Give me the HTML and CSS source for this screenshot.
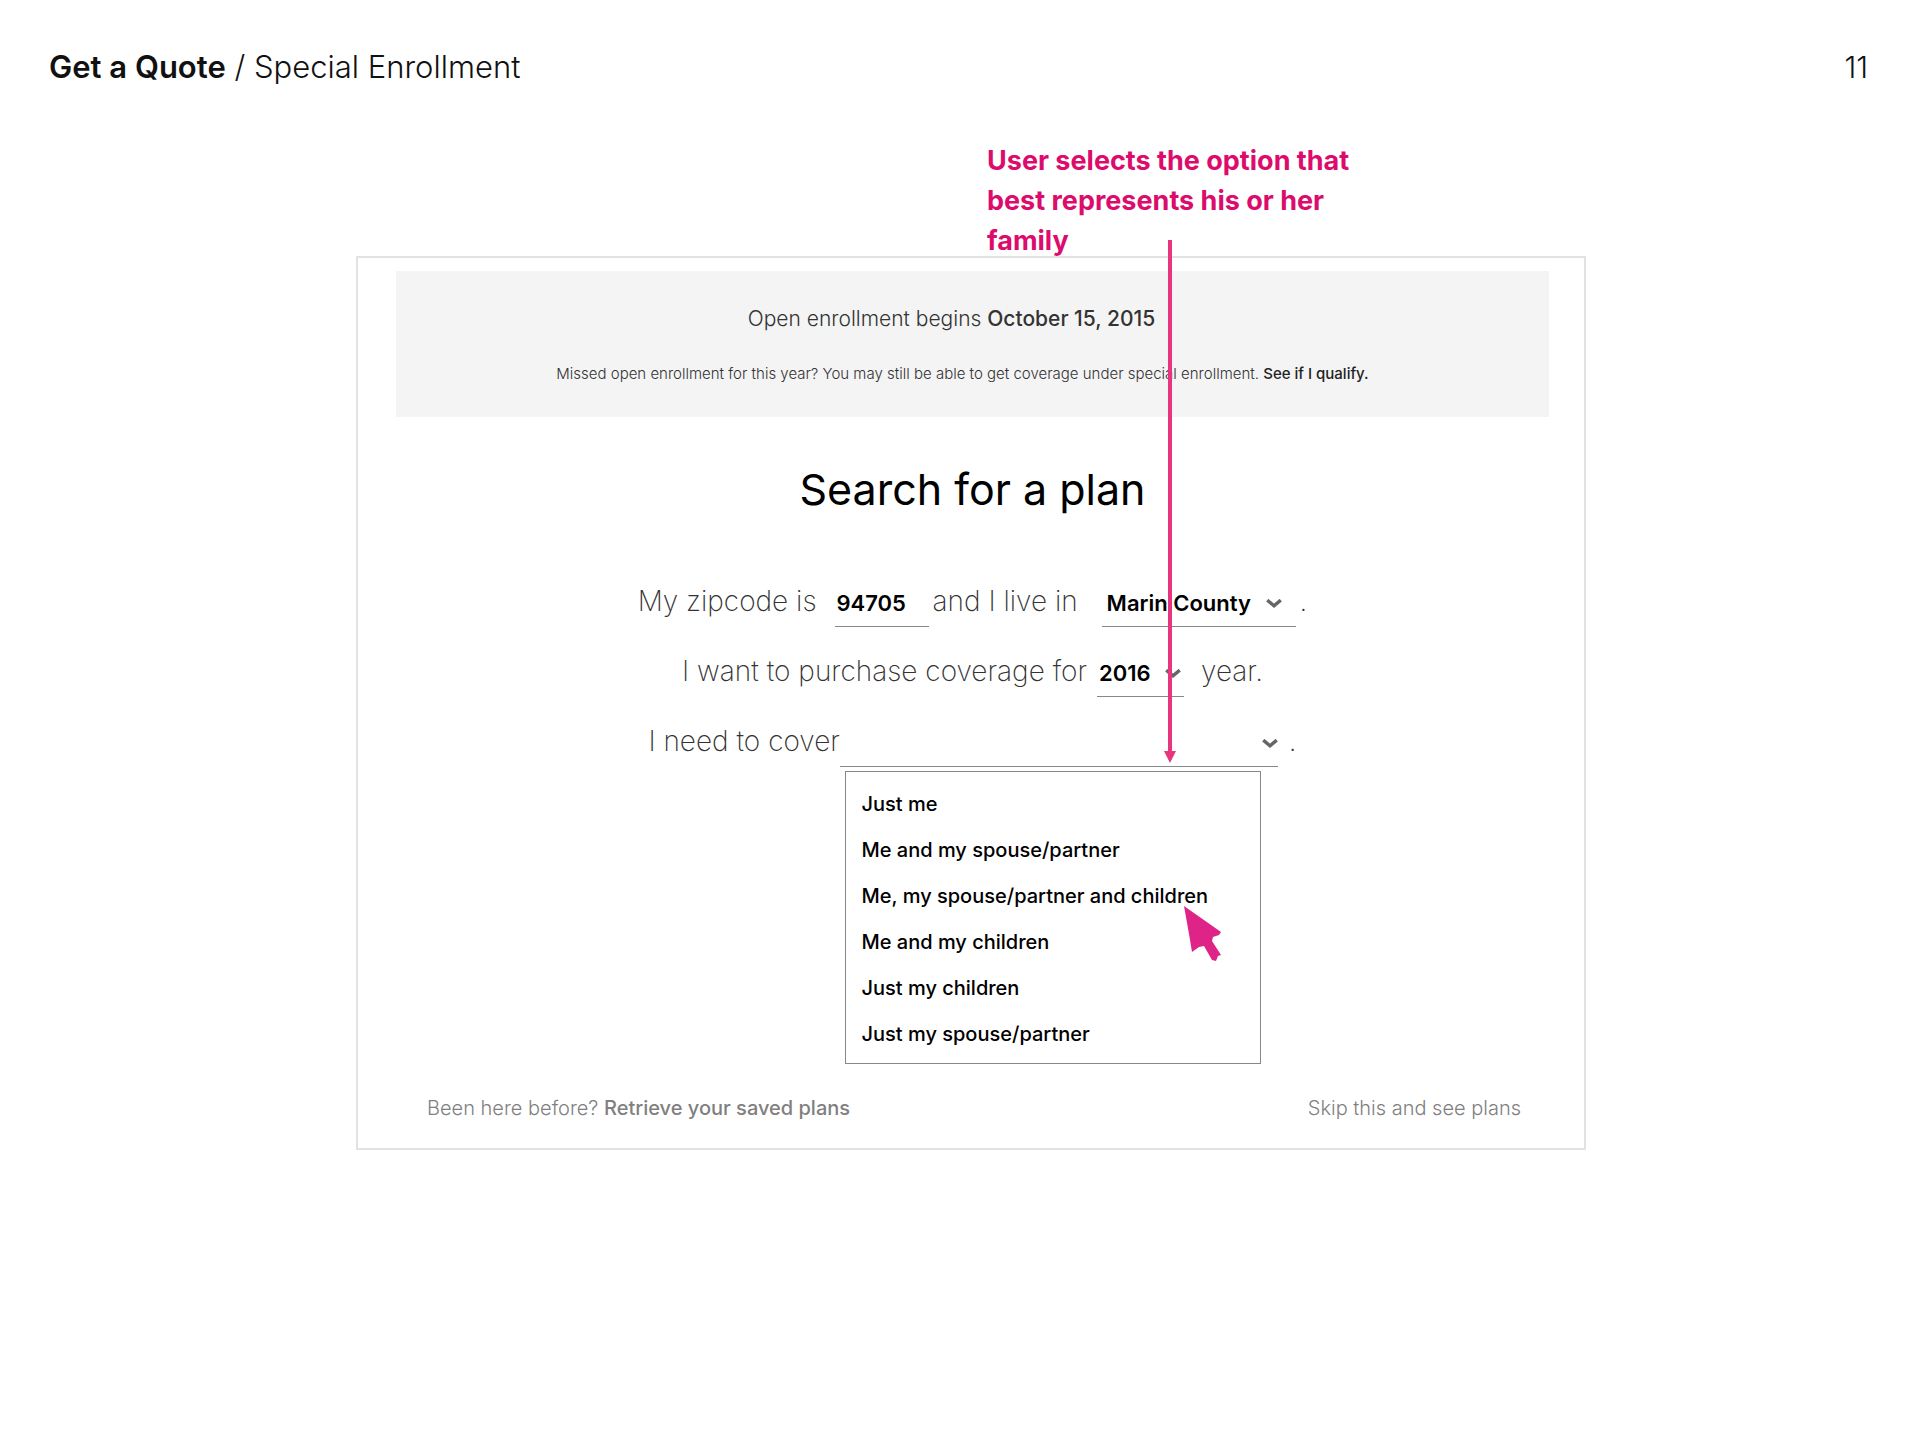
FILE: index.html
```html
<!DOCTYPE html>
<html lang="en">
<head>
<meta charset="utf-8">
<meta name="viewport" content="width=device-width, initial-scale=1">
<title>Get a Quote / Special Enrollment</title>
<link rel="stylesheet" href="styles.css">
</head>
<body>
<header class="page-header">
  <h1 class="page-title"><strong>Get a Quote</strong> / Special Enrollment</h1>
  <span class="page-number">11</span>
</header>
<main class="stage">
  <p class="callout">User selects the option that best represents his or her family</p>
  <section class="card">
    <div class="banner">
      <p class="banner-lead">Open enrollment begins <strong>October 15, 2015</strong></p>
      <p class="banner-note">Missed open enrollment for this year? You may still be able to get coverage under special enrollment. <a href="#qualify">See if I qualify.</a></p>
    </div>
    <h2 class="card-title">Search for a plan</h2>
    <form class="sentence">
      <div class="row">
        <label class="gap-wide" for="zip">My zipcode is</label>
        <input class="control zip" id="zip" type="text" value="94705">
        <label class="gap-lead gap-county" for="county">and I live in</label>
        <span class="field county">
          <select class="control" id="county"><option>Marin County</option></select>
          <svg class="chevron" viewBox="0 0 14 8" aria-hidden="true"><path d="M1 1l6 5 6-5"/></svg>
        </span>
        <span class="stop">.</span>
      </div>
      <div class="row">
        <label class="gap-narrow" for="year">I want to purchase coverage for</label>
        <span class="field year">
          <select class="control" id="year"><option>2016</option></select>
          <svg class="chevron" viewBox="0 0 14 8" aria-hidden="true"><path d="M1 1l6 5 6-5"/></svg>
        </span>
        <span class="after-year">year.</span>
      </div>
      <div class="row">
        <label for="cover">I need to cover</label>
        <span class="field cover">
          <select class="control" id="cover"><option></option></select>
          <svg class="chevron" viewBox="0 0 14 8" aria-hidden="true"><path d="M1 1l6 5 6-5"/></svg>
        </span>
        <span class="stop stop-far">.</span>
      </div>
      <ul class="menu">
        <li><button type="button">Just me</button></li>
        <li><button type="button">Me and my spouse/partner</button></li>
        <li><button type="button">Me, my spouse/partner and children</button></li>
        <li><button type="button">Me and my children</button></li>
        <li><button type="button">Just my children</button></li>
        <li><button type="button">Just my spouse/partner</button></li>
        <li class="pointer" aria-hidden="true"><svg viewBox="0 0 38 56"><path d="M0 0L37 26 35 29 29 31 28 35 37 49 34 50 32 55 28 54 20 40 15 41 8 46 5 28z"/></svg></li>
      </ul>
    </form>
    <footer class="card-footer">
      <p>Been here before? <a class="strong-link" href="#saved">Retrieve your saved plans</a></p>
      <a href="#plans">Skip this and see plans</a>
    </footer>
  </section>
  <svg class="arrow" viewBox="0 0 12 523" aria-hidden="true"><path d="M4 0h4v511h4l-6 12-6-12h4z"/></svg>
</main>
</body>
</html>
```
FILE: styles.css
```css
* { box-sizing: border-box; }

body {
  margin: 0;
  background: #fff;
  color: #111;
  font-family: Inter, "Liberation Sans", sans-serif;
  font-weight: 300;
}

h1, h2, p, ul { margin: 0; padding: 0; }
a { color: inherit; text-decoration: none; }

.page-header {
  display: flex;
  justify-content: space-between;
  padding: 45px 52px 52px 49px;
  font-size: 30px;
  line-height: 44px;
}
.page-title { font-size: 31px; font-weight: 300; }
.page-title strong { font-weight: 600; }

.stage {
  position: relative;
  width: calc(100% - 22px);
  max-width: 1230px;
  margin: 0 auto;
  left: 11px;
}

.callout {
  width: 410px;
  margin: 0 0 -5px 631px;
  color: #dc0c6c;
  font-size: 27px;
  font-weight: 700;
  line-height: 40px;
}

.card {
  padding: 13px 35px 26px 38px;
  border: 2px solid #e1e2e6;
}

.banner {
  padding: 34px 0 29px;
  background: #f4f4f4;
  color: #333;
  line-height: 28px;
  text-align: center;
}
.banner-lead { padding-right: 42px; font-size: 21px; }
.banner-lead strong { font-weight: 500; }
.banner-note { margin-top: 27px; padding-right: 20px; font-size: 15px; }
.banner-note a { color: #222; font-weight: 500; }

.card-title {
  margin: 48px 0 66px;
  color: #000;
  font-size: 43px;
  font-weight: 400;
  line-height: 48px;
  text-align: center;
}

.sentence {
  display: flex;
  flex-direction: column;
  gap: 22px;
}
.row {
  display: flex;
  justify-content: center;
  align-items: center;
  height: 48px;
  color: #333;
  font-size: 28px;
  font-weight: 200;
  white-space: nowrap;
}
.row label, .stop, .after-year { padding-bottom: 4px; }
.gap-wide { margin-right: 18px; }
.gap-narrow { margin-right: 10px; }
.gap-lead { margin-left: 4px; }
.gap-county { margin-right: 24px; }
.after-year { margin-left: 17px; }
.stop { margin-left: 4px; }
.stop-far { margin-left: 11px; }

.control {
  width: 100%;
  height: 48px;
  padding: 0 0 0 2px;
  border: 0;
  border-bottom: 1px solid #888;
  border-radius: 0;
  background: none;
  color: #000;
  font: 600 22px Inter, "Liberation Sans", sans-serif;
  appearance: none;
}
.zip { width: 94px; }
.field { position: relative; }
.county { width: 194px; }
.county .control { padding-left: 5px; }
.year { width: 87px; }
.cover { width: 438px; }
.chevron {
  position: absolute;
  right: 14px;
  top: 20px;
  width: 16px;
  height: 9px;
  fill: none;
  stroke: #666;
  stroke-width: 3;
}
.year .chevron { right: 3px; }
.cover .chevron { right: 0; }

.menu {
  position: relative;
  align-self: center;
  width: 416px;
  margin: -18px 0 0 160px;
  padding: 9px 0 6px;
  border: 1px solid #888;
  background: #fff;
  list-style: none;
}
.menu button {
  display: block;
  width: 100%;
  padding: 0 0 0 16px;
  border: 0;
  background: none;
  color: #000;
  font: 500 20px/46px Inter, "Liberation Sans", sans-serif;
  text-align: left;
}
.pointer {
  position: absolute;
  left: 338px;
  top: 134px;
  width: 38px;
  height: 56px;
}
.pointer svg { display: block; fill: #de2587; }

.card-footer {
  display: flex;
  justify-content: space-between;
  margin-top: 30px;
  padding: 0 28px 0 31px;
  color: #808080;
  font-size: 20px;
  line-height: 28px;
}
.strong-link { font-weight: 500; }

.arrow {
  position: absolute;
  left: 808px;
  top: 99px;
  width: 12px;
  height: 523px;
  fill: #e8357f;
}
```
